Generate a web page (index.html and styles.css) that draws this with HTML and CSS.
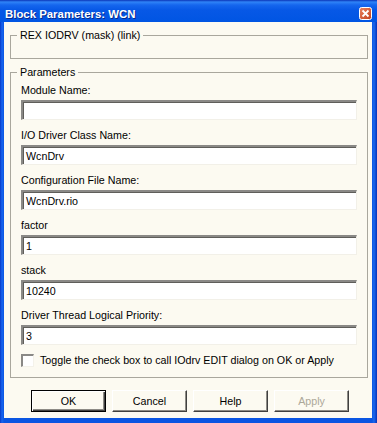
FILE: index.html
```html
<!DOCTYPE html>
<html lang="en">
<head>
  <meta charset="UTF-8">
  <title>Block Parameters: WCN</title>
  <link rel="stylesheet" href="styles.css">
</head>
<body>

  <div class="window">

    <!-- Title bar -->
    <div class="titlebar">
      <span class="title">Block Parameters: WCN</span>
      <span class="close">
        <svg width="13" height="13" viewBox="0 0 13 13">
          <defs>
            <linearGradient id="closeFill" x1="0" y1="0" x2="1" y2="1">
              <stop offset="0" stop-color="#e9825f"/>
              <stop offset="1" stop-color="#c1401e"/>
            </linearGradient>
          </defs>
          <rect x="0.5" y="0.5" width="12" height="12" rx="2" fill="url(#closeFill)" stroke="#fff"/>
          <path d="M3.5 3.5 L9.5 9.5 M9.5 3.5 L3.5 9.5" stroke="#fff" stroke-width="1.8"/>
        </svg>
      </span>
    </div>

    <div class="client">

      <fieldset class="group group-info">
        <legend>REX IODRV (mask) (link)</legend>
      </fieldset>

      <fieldset class="group group-params">
        <legend>Parameters</legend>

        <div class="field">
          <label>Module Name:</label>
          <div class="edit"></div>
        </div>
        <div class="field">
          <label>I/O Driver Class Name:</label>
          <div class="edit">WcnDrv</div>
        </div>
        <div class="field">
          <label>Configuration File Name:</label>
          <div class="edit">WcnDrv.rio</div>
        </div>
        <div class="field">
          <label>factor</label>
          <div class="edit">1</div>
        </div>
        <div class="field">
          <label>stack</label>
          <div class="edit">10240</div>
        </div>
        <div class="field">
          <label>Driver Thread Logical Priority:</label>
          <div class="edit">3</div>
        </div>

        <div class="check">
          <span class="box"></span>
          <span>Toggle the check box to call IOdrv EDIT dialog on OK or Apply</span>
        </div>
      </fieldset>

      <!-- Dialog buttons -->
      <div class="buttons">
        <button class="btn btn-default">OK</button>
        <button class="btn">Cancel</button>
        <button class="btn">Help</button>
        <button class="btn btn-disabled">Apply</button>
      </div>

    </div>
  </div>

</body>
</html>
```

FILE: styles.css
```css
/* General Styles */
body {
  margin: 0;
  padding: 0;
  font-family: "Liberation Sans", Arial, sans-serif;
  font-size: 10.7px;
  color: #000;
  background-color: #0a4fd8;
}

.window {
  width: 377px;
  height: 423px;
  display: flex;
  flex-direction: column;
  background: linear-gradient(to right, #0838c6 0, #1766f0 2px, #0a55e2 4px, #0a55e2 372px, #1a68ee 374px, #0633b8 377px);
}

/* Title bar */
.titlebar {
  height: 22px;
  display: flex;
  justify-content: space-between;
  align-items: flex-start;
  padding: 0 5px 0 5px;
  background: linear-gradient(#0b35b8 0, #2f83f7 2px, #1566ee 5px, #0758e6 10px, #0055e3 22px);
}

.title {
  margin-top: 7px;
  line-height: 14px;
  font-size: 11.4px;
  font-weight: bold;
  color: #fff;
  text-shadow: 1px 1px 0 #0a2a8a;
}

.close {
  margin-top: 7px;
  width: 13px;
  height: 13px;
}

.close svg {
  display: block;
}

/* Client area */
.client {
  flex: 1;
  margin: 0 5px 5px 4px;
  background-color: #fcfaf1;
  display: flex;
  flex-direction: column;
}

.group {
  margin: 6px 4px 0 6px;
  padding: 0 10px 0 10px;
  border: 1px solid #a9a79d;
  min-width: 0;
}

.group legend {
  margin-left: -4px;
  padding: 0 3px;
  line-height: 14px;
}

.group-info {
  padding-bottom: 16px;
}

.group-params {
  padding-top: 4px;
  padding-bottom: 10px;
}

.field {
  margin-bottom: 8px;
}

.field label {
  display: block;
  line-height: 14px;
  margin-bottom: 3px;
}

.edit {
  box-sizing: border-box;
  height: 20px;
  padding: 0 0 0 3px;
  line-height: 18px;
  background-color: #fff;
  border-top: 2px solid #8a8986;
  border-left: 2px solid #8a8986;
  border-right: 1px solid #f2f0e8;
  border-bottom: 1px solid #f2f0e8;
  box-shadow: inset 1px 1px 0 #5f5e5a;
}

.check {
  display: flex;
  align-items: center;
  gap: 6px;
  line-height: 14px;
  margin-top: 2px;
}

.check .box {
  box-sizing: border-box;
  width: 13px;
  height: 13px;
  background-color: #fff;
  border-top: 2px solid #8a8986;
  border-left: 2px solid #8a8986;
  border-right: 1px solid #f4f2ea;
  border-bottom: 1px solid #f4f2ea;
}

/* Buttons */
.buttons {
  display: flex;
  gap: 6px;
  margin-top: 12px;
  padding-left: 27px;
}

.btn {
  box-sizing: border-box;
  width: 75px;
  height: 22px;
  padding: 0;
  font-family: inherit;
  font-size: 10.7px;
  color: #000;
  background-color: #fcfaf1;
  border-top: 1px solid #fff;
  border-left: 1px solid #fff;
  border-right: 1px solid #404040;
  border-bottom: 1px solid #404040;
  box-shadow: inset -1px -1px 0 #8d8b85;
}

.btn-default {
  border: 1px solid #000;
  box-shadow: inset 1px 1px 0 #fff, inset -1px -1px 0 #404040, inset -2px -2px 0 #8d8b85;
}

.btn-disabled {
  color: #aca899;
}
```
